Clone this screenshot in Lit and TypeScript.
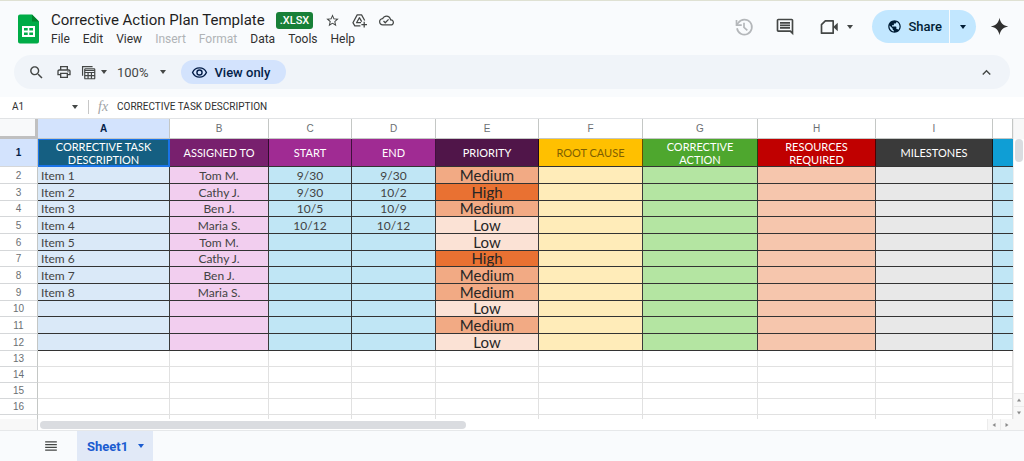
import { LitElement, html, svg, css, nothing } from "lit";
import { customElement } from "lit/decorators.js";
import { classMap } from "lit/directives/class-map.js";

const icon = (size: number, body: unknown, cls = "") =>
  html`<svg class="icon ${cls}" width=${size} height=${size} viewBox="0 0 24 24" aria-hidden="true">${body}</svg>`;

const icons = {
  star: svg`<path d="M22 9.24l-7.19-.62L12 2 9.19 8.63 2 9.24l5.46 4.73L5.82 21 12 17.27 18.18 21l-1.63-7.03L22 9.24zM12 15.4l-3.76 2.27 1-4.28-3.32-2.88 4.38-.38L12 6.1l1.71 4.04 4.38.38-3.32 2.88 1 4.28L12 15.4z"/>`,
  drive: svg`<g fill="none" stroke="currentColor" stroke-width="2" stroke-linejoin="round"><path d="M13.500 20.500H4.500L1.500 15.500 8.300 3h7l5 9"/><path d="M14.500 15.500H7.300L11.800 7.500l3.700 6.200"/><path d="M19.500 14v9M15 18.500h9"/></g>`,
  cloud: svg`<path d="M19.35 10.04C18.67 6.59 15.64 4 12 4 9.11 4 6.6 5.64 5.35 8.04 2.34 8.36 0 10.91 0 14c0 3.31 2.69 6 6 6h13c2.76 0 5-2.24 5-5 0-2.64-2.05-4.78-4.65-4.96zM19 18H6c-2.21 0-4-1.79-4-4 0-2.05 1.53-3.76 3.56-3.97l1.07-.11.5-.95C8.08 7.14 9.94 6 12 6c2.62 0 4.88 1.86 5.39 4.43l.3 1.5 1.53.11c1.56.1 2.78 1.41 2.78 2.96 0 1.65-1.35 3-3 3zm-9-3.82l-2.09-2.09L6.5 13.5 10 17l6.01-6.01-1.41-1.41z"/>`,
  history: svg`<g fill="none" stroke="currentColor" stroke-width="2"><path d="M3.600 13.500A9 9 0 1 0 5.200 6.800L3 9.500"/><path d="M3 3.500v6.300h6.300"/><path d="M12 7v5.400l4 3.600"/></g>`,
  comment: svg`<path d="M21.99 4c0-1.1-.89-2-1.99-2H4c-1.1 0-2 .9-2 2v12c0 1.1.9 2 2 2h14l4 4-.01-18zM20 4v13.17L18.83 16H4V4h16zM6 12h12v2H6zm0-3h12v2H6zm0-3h12v2H6z"/>`,
  camera: svg`<path d="M7.600 4.600H17v14.800H3V9.200z" fill="none" stroke="currentColor" stroke-width="2" stroke-linejoin="round"/><path d="M17 12l5.500-5v10z"/>`,
  globe: svg`<path d="M12 2C6.48 2 2 6.48 2 12s4.480 10 10 10 10-4.480 10-10S17.520 2 12 2zm-1 17.930c-3.950-.49-7-3.850-7-7.930 0-.62.08-1.210.21-1.790L9 15v1c0 1.100.9 2 2 2v1.930zm6.900-2.540c-.26-.81-1-1.390-1.900-1.390h-1v-3c0-.55-.45-1-1-1H8v-2h2c.55 0 1-.45 1-1V7h2c1.100 0 2-.9 2-2v-.41c2.930 1.190 5 4.060 5 7.410 0 2.080-.8 3.970-2.100 5.390z"/>`,
  spark: svg`<path d="M12 1c.9 6.200 4.800 10.100 11 11-6.200.9-10.100 4.800-11 11-.9-6.200-4.800-10.100-11-11 6.200-.9 10.100-4.800 11-11z"/>`,
  search: svg`<path d="M15.500 14h-.79l-.28-.27C15.410 12.590 16 11.110 16 9.500 16 5.910 13.090 3 9.500 3S3 5.910 3 9.500 5.910 16 9.500 16c1.610 0 3.090-.59 4.230-1.570l.27.28v.79l5 4.990L20.490 19l-4.990-5zm-6 0C7.010 14 5 11.990 5 9.500S7.010 5 9.500 5 14 7.010 14 9.500 11.990 14 9.500 14z"/>`,
  print: svg`<path d="M19 8h-1V3H6v5H5c-1.660 0-3 1.340-3 3v6h4v4h12v-4h4v-6c0-1.660-1.340-3-3-3zM8 5h8v3H8V5zm8 12v2H8v-4h8v2zm2-2v-2H6v2H4v-4c0-.55.45-1 1-1h14c.55 0 1 .45 1 1v4h-2z"/><circle cx="18" cy="11.500" r="1"/>`,
  filterView: svg`<g fill="none" stroke="currentColor" stroke-width="1.900"><path d="M2.500 17V2.500H18.500"/><rect x="6" y="6" width="16" height="16" rx="1"/><path d="M6 8.500h16M6 12h16M6 17h16M11.300 12v10M16.700 12v10"/></g>`,
  eye: svg`<g fill="none" stroke="currentColor" stroke-width="2"><path d="M2.200 12C4 8 7.700 5.500 12 5.500S20 8 21.800 12C20 16 16.300 18.500 12 18.500S4 16 2.200 12z"/><circle cx="12" cy="12" r="3.600"/></g>`,
  up: svg`<path d="M12 8l-6 6 1.410 1.410L12 10.830l4.590 4.580L18 14z"/>`,
  menu: svg`<path d="M2 4h20v2H2zM2 8.700h20v2H2zM2 13.400h20v2H2zM2 18h20v2H2z"/>`,
};

const caret = html`<svg class="icon" width="6" height="4" viewBox="0 0 6 4" aria-hidden="true"><path d="M0 0h6L3 4z"/></svg>`;

const menus: [string, boolean][] = [
  ["File", true], ["Edit", true], ["View", true], ["Insert", false],
  ["Format", false], ["Data", true], ["Tools", true], ["Help", true],
];

const columns = [
  { id: "A", key: "task", title: "CORRECTIVE TASK DESCRIPTION" },
  { id: "B", key: "owner", title: "ASSIGNED TO" },
  { id: "C", key: "start", title: "START" },
  { id: "D", key: "end", title: "END" },
  { id: "E", key: "priority", title: "PRIORITY" },
  { id: "F", key: "cause", title: "ROOT CAUSE" },
  { id: "G", key: "action", title: "CORRECTIVE ACTION" },
  { id: "H", key: "resources", title: "RESOURCES REQUIRED" },
  { id: "I", key: "milestones", title: "MILESTONES" },
  { id: "", key: "next", title: "" },
];

const rows: string[][] = [
  ["Item 1", "Tom M.", "9/30", "9/30", "Medium"],
  ["Item 2", "Cathy J.", "9/30", "10/2", "High"],
  ["Item 3", "Ben J.", "10/5", "10/9", "Medium"],
  ["Item 4", "Maria S.", "10/12", "10/12", "Low"],
  ["Item 5", "Tom M.", "", "", "Low"],
  ["Item 6", "Cathy J.", "", "", "High"],
  ["Item 7", "Ben J.", "", "", "Medium"],
  ["Item 8", "Maria S.", "", "", "Medium"],
  ["", "", "", "", "Low"],
  ["", "", "", "", "Medium"],
  ["", "", "", "", "Low"],
];

const blankRows = ["13", "14", "15", "16", ""];

@customElement("sheet-grid")
class SheetGrid extends LitElement {
  static styles = css`
    :host { display: flex; flex: 1; min-height: 0; flex-direction: column; background: #fff; }
    .view { display: flex; flex: 1; min-height: 0; }
    .cells { flex: 1; min-width: 0; overflow: hidden; }
    table { width: 100%; table-layout: fixed; border-spacing: 0; font-family: Lato, sans-serif; font-size: 12px; color: #434343; }
    th, td { box-sizing: border-box; padding: 0; font-weight: 400; line-height: 15px; white-space: nowrap; text-align: center; vertical-align: bottom; }
    .c-num { width: 38px; }
    .c-task { width: 132px; }
    .c-owner { width: 99px; }
    .c-start { width: 83px; }
    .c-end { width: 84px; }
    .c-priority { width: 103px; }
    .c-cause { width: 104px; }
    .c-action { width: 115px; }
    .c-resources { width: 118px; }
    .c-milestones { width: 117px; }
    .letters th { height: 20px; border-right: 1px solid #c4c7c5; border-bottom: 1px solid #c4c7c5; background: #fff; color: #6b6f73; font: 10px/16px "Liberation Sans", sans-serif; vertical-align: middle; }
    .letters .corner { border-right: 3px solid #c0c0c0; border-bottom: 3px solid #c0c0c0; background: #f8f9fa; }
    .letters .picked, .num.picked { background: #d3e3fd; color: #041e49; font-weight: 700; }
    .num { border-right: 1px solid #c4c7c5; border-bottom: 1px solid #d5d7d9; background: #fff; color: #6b6f73; font: 10px/15px "Liberation Sans", sans-serif; vertical-align: middle; }
    .titles th { height: 28px; }
    .titles td { height: 28px; border-right: 1px solid rgba(0, 0, 0, 0.6); border-bottom: 1px solid #333; color: #fff; font-size: 11px; line-height: 13px; white-space: normal; vertical-align: middle; }
    .titles .task { border-color: #1a73e8; background: #155f82; box-shadow: inset 1px 1px #1a73e8, inset -1px -1px #1a73e8; }
    .titles .owner { background: #78206e; }
    .titles .start, .titles .end { background: #a02b93; }
    .titles .priority { background: #501549; }
    .titles .cause { background: #ffc000; color: #7f5f00; }
    .titles .action { background: #4ea72e; }
    .titles .resources { background: #c00000; }
    .titles .milestones { background: #3a3a3a; }
    .titles .next { background: #0f9ed5; }
    .titles .task, .titles .action, .titles .resources { padding: 0 16px; }
    .data > * { height: 17px; }
    .data:nth-child(3n) > * { height: 16px; }
    .data td { border-right: 1px solid #3a3a3a; border-bottom: 1px solid #333; }
    .data .task { padding-left: 3px; background: #dae9f8; text-align: left; }
    .data .owner { background: #f2ceef; }
    .data .start, .data .end, .data .next { background: #c0e6f5; }
    .data .cause { background: #ffecb9; }
    .data .action { background: #b4e5a2; }
    .data .resources { background: #f6c6ad; }
    .data .milestones { background: #e8e8e8; }
    .data .priority { color: #262626; font-size: 15px; }
    .data .Medium { background: #f2aa84; }
    .data .High { background: #e97132; }
    .data .Low { background: #fbe2d5; }
    td.next.next { border-right: 0; }
    .blank > * { height: 16px; }
    .blank td { border-right: 1px solid #e1e1e1; border-bottom: 1px solid #e1e1e1; }
    .vbar { display: flex; flex-direction: column; width: 11px; align-items: center; border-left: 1px solid #efefef; box-sizing: border-box; }
    .vbar .head { align-self: stretch; height: 20px; background: #f8f8f8; }
    .vthumb { width: 8px; height: 23px; border-radius: 4px; background: #dadce0; }
    .space { flex: 1; }
    .hbar { display: flex; align-items: center; height: 11px; border-bottom: 1px solid #e6e8ea; background: #f8f8f8; }
    .stub { width: 38px; height: 11px; box-sizing: border-box; border-right: 1px solid #d5d7d9; }
    .track { display: flex; flex: 1; align-items: center; height: 11px; padding-left: 2px; background: #fff; }
    .hthumb { width: 45%; height: 8px; border-radius: 4px; background: #dadce0; }
    .step { display: flex; box-sizing: border-box; width: 13px; height: 11px; padding: 0; border: 0; border-left: 1px solid #ececec; align-items: center; justify-content: center; background: #f8f8f8; color: #8a8a8a; }
    .vbar .step { width: 10px; height: 13px; border-left: 0; border-top: 1px solid #ececec; }
    .end-gap { width: 11px; }
    svg { fill: currentColor; }
  `;

  private arrow(label: string, d: string) {
    return html`<button class="step" aria-label=${label}><svg width="4" height="4" viewBox="0 0 4 4"><path d=${d} /></svg></button>`;
  }

  render() {
    return html`
      <div class="view">
        <div class="cells">
          <table>
            <colgroup>
              <col class="c-num" />
              ${columns.map((c) => html`<col class="c-${c.key}" />`)}
            </colgroup>
            <thead>
              <tr class="letters">
                <th class="corner"></th>
                ${columns.map((c) => html`<th scope="col" class=${classMap({ picked: c.id === "A" })}>${c.id}</th>`)}
              </tr>
              <tr class="titles">
                <th scope="row" class="num picked">1</th>
                ${columns.map((c) => html`<td class=${c.key}>${c.title}</td>`)}
              </tr>
            </thead>
            <tbody>
              ${rows.map((r, i) => html`<tr class="data">
                <th scope="row" class="num">${i + 2}</th>
                ${columns.map((c, j) => html`<td class="${c.key} ${c.key === "priority" ? r[j] : ""}">${r[j] ?? nothing}</td>`)}
              </tr>`)}
              ${blankRows.map((n) => html`<tr class="blank">
                <th scope="row" class="num">${n}</th>
                ${columns.map(() => html`<td></td>`)}
              </tr>`)}
            </tbody>
          </table>
        </div>
        <div class="vbar">
          <div class="head"></div>
          <div class="vthumb"></div>
          <div class="space"></div>
          ${this.arrow("Scroll up", "M0 3.500h4L2 .5z")}
          ${this.arrow("Scroll down", "M0 .5h4L2 3.500z")}
        </div>
      </div>
      <div class="hbar">
        <div class="stub"></div>
        <div class="track"><div class="hthumb"></div></div>
        ${this.arrow("Scroll left", "M3.500 0v4L.5 2z")}
        ${this.arrow("Scroll right", "M.5 0v4L3.500 2z")}
        <div class="end-gap"></div>
      </div>
    `;
  }
}

@customElement("app-root")
class AppRoot extends LitElement {
  static styles = css`
    :host { display: flex; flex-direction: column; height: 100vh; box-sizing: border-box; overflow: hidden; border-top: 1px solid #dfe1d3; background: #f9fbfd; color: #1f1f1f; font-family: Roboto, sans-serif; font-size: 13px; }
    button { display: flex; align-items: center; padding: 0; border: 0; background: none; color: inherit; font: inherit; white-space: nowrap; }
    .icon { display: block; flex: none; fill: currentColor; }
    header { display: flex; align-items: flex-start; box-sizing: border-box; padding: 9px 15px 0 18px; height: 54px; color: #444746; }
    .logo { flex: none; margin-top: 4px; }
    .names { display: flex; flex: 1; flex-direction: column; padding-left: 12px; }
    .title-row { display: flex; align-items: center; height: 20px; }
    h1 { margin: 0; color: #1f1f1f; font-size: 15px; font-weight: 400; line-height: 20px; white-space: nowrap; }
    .badge { margin: 0 12px 0 11px; padding: 0 4px; border-radius: 3px; background: #188038; color: #fff; font-size: 11px; font-weight: 500; line-height: 17px; }
    .title-icons { display: flex; gap: 12px; }
    nav { display: flex; gap: 13px; height: 18px; font-size: 12px; }
    nav button { color: #303030; }
    nav button:disabled { color: #b0b3b6; }
    .actions { display: flex; align-items: center; height: 33px; }
    .history { margin-right: 21px; color: #b4b7ba; }
    .comments { margin-right: 24px; }
    .meet { gap: 8px; margin-right: 19px; }
    .share { display: flex; height: 33px; border-radius: 17px; overflow: hidden; background: #c2e7ff; color: #001d35; }
    .share .main { gap: 6px; padding: 0 7px 0 15px; font-weight: 500; }
    .share .more { width: 27px; justify-content: center; border-left: 1px solid #f9fbfd; }
    .spark { margin-left: 14px; color: #303030; }
    .toolbar { display: flex; align-items: center; height: 34px; margin: 0 14px; padding: 0 15px 0 14px; border-radius: 17px; background: #f0f4f9; color: #444746; }
    .search { margin-right: 11px; }
    .print { margin-right: 9px; }
    .filter { gap: 5px; margin-right: 10px; }
    .zoom { gap: 12px; margin-right: 15px; }
    .view-only { gap: 6px; height: 24px; padding: 0 16px 0 10px; border-radius: 12px; background: #d3e3fd; color: #041e49; font-weight: 500; }
    .collapse { margin-left: auto; }
    .formula { display: flex; align-items: center; height: 20px; margin-top: 8px; padding-bottom: 1px; border-bottom: 1px solid #e1e3e5; background: #fff; color: #444746; }
    .formula input { min-width: 0; padding: 0; border: 0; outline: 0; background: none; color: #303030; font: 10px/16px Roboto, sans-serif; }
    .formula .ref { width: 60px; padding-left: 12px; }
    .formula .content { flex: 1; }
    .rule { width: 1px; height: 14px; margin: 0 9px 0 10px; background: #c7c7c7; }
    .fx { width: 19px; color: #a0a3a6; font: italic 14px/16px "Liberation Serif", serif; }
    footer { display: flex; align-items: stretch; height: 30px; color: #444746; }
    .all { padding: 0 19px 0 44px; }
    .tab { gap: 10px; padding: 0 9px 0 10px; background: #e1e9f7; color: #1a5bd0; font-weight: 700; }
  `;

  render() {
    return html`
      <header>
        <svg class="logo" width="21" height="30" viewBox="0 0 21 30" aria-hidden="true">
          <path d="M2 .5h12l7 7v20a2 2 0 0 1-2 2H2a2 2 0 0 1-2-2v-25a2 2 0 0 1 2-2z" fill="#00ac47" />
          <path d="M14 .5l7 7h-7z" fill="#00832d" />
          <path d="M4 12h13v11H4zM6 14v2.500h3.700V14zm5.300 0v2.500H15V14zM6 18.500V21h3.700v-2.500zm5.300 0V21H15v-2.500z" fill="#fff" fill-rule="evenodd" />
        </svg>
        <div class="names">
          <div class="title-row">
            <h1>Corrective Action Plan Template</h1>
            <span class="badge">.XLSX</span>
            <div class="title-icons">
              <button aria-label="Star">${icon(15, icons.star)}</button>
              <button aria-label="Add to Drive">${icon(15, icons.drive)}</button>
              <button aria-label="Document status">${icon(15, icons.cloud)}</button>
            </div>
          </div>
          <nav>${menus.map(([name, on]) => html`<button ?disabled=${!on}>${name}</button>`)}</nav>
        </div>
        <div class="actions">
          <button class="history" aria-label="Version history">${icon(20, icons.history)}</button>
          <button class="comments" aria-label="Comments">${icon(20, icons.comment)}</button>
          <button class="meet" aria-label="Join a call">${icon(20, icons.camera)}${caret}</button>
          <div class="share">
            <button class="main">${icon(15, icons.globe)}Share</button>
            <button class="more" aria-label="Sharing options">${caret}</button>
          </div>
          <button class="spark" aria-label="Assistant">${icon(19, icons.spark)}</button>
        </div>
      </header>
      <div class="toolbar">
        <button class="search" aria-label="Search the menus">${icon(17, icons.search)}</button>
        <button class="print" aria-label="Print">${icon(16, icons.print)}</button>
        <button class="filter" aria-label="Filter views">${icon(15, icons.filterView)}${caret}</button>
        <button class="zoom" aria-label="Zoom">100%${caret}</button>
        <button class="view-only">${icon(17, icons.eye)}View only</button>
        <button class="collapse" aria-label="Hide the menus">${icon(17, icons.up)}</button>
      </div>
      <div class="formula">
        <input class="ref" aria-label="Name box" value="A1" />
        <button aria-label="Named ranges">${caret}</button>
        <span class="rule"></span>
        <label class="fx" for="content">fx</label>
        <input class="content" id="content" readonly value="CORRECTIVE TASK DESCRIPTION" />
      </div>
      <sheet-grid></sheet-grid>
      <footer>
        <button class="all" aria-label="All sheets">${icon(14, icons.menu)}</button>
        <button class="tab">Sheet1${caret}</button>
      </footer>
    `;
  }
}
